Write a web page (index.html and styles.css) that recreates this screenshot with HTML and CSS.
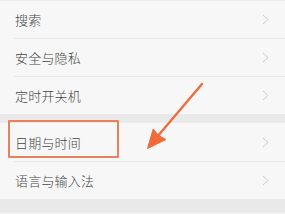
FILE: index.html
```html
<!DOCTYPE html>
<html lang="zh">
<head>
<meta charset="utf-8">
<link rel="stylesheet" href="styles.css">
</head>
<body>
<div class="page">
  <div class="group top">
    <div class="row"><span class="label">搜索</span><svg class="chev" viewBox="0 0 7 11"><polyline points="1,1 6,5.5 1,10"/></svg></div>
    <div class="row"><span class="label">安全与隐私</span><svg class="chev" viewBox="0 0 7 11"><polyline points="1,1 6,5.5 1,10"/></svg></div>
    <div class="row"><span class="label">定时开关机</span><svg class="chev" viewBox="0 0 7 11"><polyline points="1,1 6,5.5 1,10"/></svg></div>
  </div>
  <div class="band"></div>
  <div class="group">
    <div class="row tall"><span class="label">日期与时间</span><svg class="chev" viewBox="0 0 7 11"><polyline points="1,1 6,5.5 1,10"/></svg></div>
    <div class="row"><span class="label">语言与输入法</span><svg class="chev" viewBox="0 0 7 11"><polyline points="1,1 6,5.5 1,10"/></svg></div>
  </div>
  <div class="band end"></div>
  <div class="highlight"></div>
  <svg class="arrow" width="285" height="214" viewBox="0 0 285 214">
    <line x1="202" y1="84" x2="157" y2="137" />
    <polygon points="147.5,148.5 153.2,129 158.5,135.5 166,139.5" />
  </svg>
</div>
</body>
</html>
```

FILE: styles.css
```css
* { box-sizing: border-box; }
html, body { margin: 0; padding: 0; }
body {
  width: 285px;
  height: 214px;
  overflow: hidden;
  background: #f6f6f6;
  font-family: "Noto Sans CJK SC", "Noto Sans", sans-serif;
}
.page {
  position: relative;
  width: 285px;
  height: 214px;
}
.group {
  display: flex;
  flex-direction: column;
  background: #f7f7f7;
}
.group.top {
  border-top: 1px solid #ebebeb;
}
.row {
  display: flex;
  align-items: center;
  justify-content: space-between;
  height: 38px;
  margin-left: 14px;
  padding-right: 16px;
  border-bottom: 1px solid #e9e9e9;
}
.row:last-child {
  border-bottom: none;
  height: 37px;
}
.row.tall { height: 39px; }
.label {
  font-size: 13px;
  font-weight: 300;
  color: #454545;
  padding-left: 1px;
  letter-spacing: 0.2px;
}
.chev {
  width: 7px;
  height: 11px;
  fill: none;
  stroke: #cbcbcb;
  stroke-width: 1;
}
.band {
  height: 9px;
  background: #e9e9e9;
}
.band.end { height: 14px; }
.highlight {
  position: absolute;
  left: 8px;
  top: 120px;
  width: 111px;
  height: 38px;
  border: 2px solid #e8825e;
  border-radius: 1px;
}
.arrow {
  position: absolute;
  left: 0;
  top: 0;
}
.arrow line {
  stroke: #f06c3e;
  stroke-width: 2.4;
  stroke-linecap: round;
}
.arrow polygon {
  fill: #f26a38;
  stroke: #f26a38;
  stroke-width: 1;
  stroke-linejoin: round;
}
```
